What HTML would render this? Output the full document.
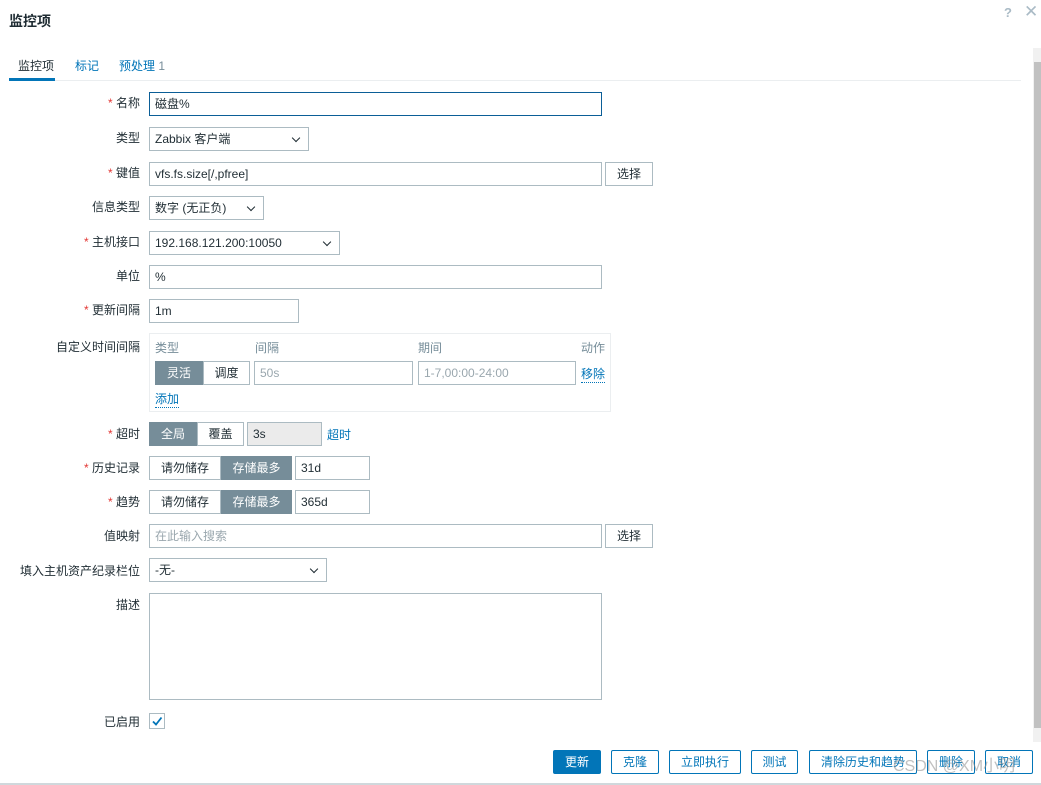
<!DOCTYPE html>
<html><head><meta charset="utf-8"><style>
*{box-sizing:border-box;margin:0;padding:0}
body{width:1041px;height:785px;background:#fff;font-family:"Liberation Sans","Noto Sans CJK SC",sans-serif;font-size:12px;color:#1f2c33;position:relative;overflow:hidden}
.a{position:absolute}
.lbl{position:absolute;right:901px;text-align:right;white-space:nowrap;margin-top:-2px}
.req::before{content:"* ";color:#e33734}
.in{position:absolute;border:1px solid #acbbc2;background:#fff;height:24px;line-height:22px;padding-left:5px;white-space:nowrap}
.sel::after{content:"";position:absolute;right:9px;top:7px;width:5px;height:5px;border-right:1.5px solid #1f2c33;border-bottom:1.5px solid #1f2c33;transform:rotate(45deg)}
.btn{position:absolute;border:1px solid #0275b8;color:#0275b8;height:24px;line-height:22px;text-align:center;border-radius:2px;background:#fff}
.seg{position:absolute;height:24px;line-height:22px;text-align:center;border:1px solid #acbbc2}
.on{background:#768d99;color:#fff;border-color:#768d99}
.link{color:#0275b8}
.dot{border-bottom:1px dotted #0275b8}
.gray{color:#768d99}
</style></head><body>
<div class="a" style="left:9px;top:11px;font-size:14px;color:#1f2c33;font-weight:bold">监控项</div>
<div class="a" style="left:1004px;top:5px;color:#aabbc6;font-size:13px;font-weight:bold">?</div>
<div class="a" style="left:1024px;top:2px;color:#aabbc6;font-size:17px">✕</div>
<div class="a" style="left:10px;top:80px;width:1011px;height:1px;background:#ebeef0"></div>
<div class="a" style="left:18px;top:57px">监控项</div>
<div class="a" style="left:9px;top:78px;width:46px;height:3px;background:#0275b8"></div>
<div class="a link" style="left:75px;top:57px">标记</div>
<div class="a link" style="left:119px;top:57px">预处理 <span class="gray">1</span></div>

<div class="a" style="left:1033px;top:48px;width:8px;height:694px;background:#f1f1f1"></div>
<div class="a" style="left:1034px;top:62px;width:7px;height:666px;background:#c1c1c1"></div>

<div class="lbl req" style="top:96px">名称</div>
<div class="in" style="left:149px;top:92px;width:453px;border-color:#0b5e97">磁盘%</div>
<div class="lbl" style="top:131px">类型</div>
<div class="in sel" style="left:149px;top:127px;width:160px">Zabbix 客户端</div>
<div class="lbl req" style="top:166px">键值</div>
<div class="in" style="left:149px;top:162px;width:453px">vfs.fs.size[/,pfree]</div>
<div class="in" style="left:605px;top:162px;width:48px;text-align:center;padding:0">选择</div>
<div class="lbl" style="top:200px">信息类型</div>
<div class="in sel" style="left:149px;top:196px;width:115px">数字 (无正负)</div>
<div class="lbl req" style="top:235px">主机接口</div>
<div class="in sel" style="left:149px;top:231px;width:191px">192.168.121.200:10050</div>
<div class="lbl" style="top:269px">单位</div>
<div class="in" style="left:149px;top:265px;width:453px">%</div>
<div class="lbl req" style="top:303px">更新间隔</div>
<div class="in" style="left:149px;top:299px;width:150px">1m</div>

<div class="lbl" style="top:340px">自定义时间间隔</div>
<div class="a" style="left:149px;top:333px;width:462px;height:79px;border:1px solid #ebeef0"></div>
<div class="a gray" style="left:155px;top:339px">类型</div>
<div class="a gray" style="left:255px;top:339px">间隔</div>
<div class="a gray" style="left:418px;top:339px">期间</div>
<div class="a gray" style="left:581px;top:339px">动作</div>
<div class="seg on" style="left:155px;top:361px;width:48px">灵活</div>
<div class="seg" style="left:203px;top:361px;width:47px">调度</div>
<div class="in" style="left:254px;top:361px;width:159px;color:#9aa7ae">50s</div>
<div class="in" style="left:418px;top:361px;width:158px;color:#9aa7ae">1-7,00:00-24:00</div>
<div class="a link dot" style="left:581px;top:365px">移除</div>
<div class="a link dot" style="left:155px;top:390px">添加</div>

<div class="lbl req" style="top:427px">超时</div>
<div class="seg on" style="left:149px;top:422px;width:48px">全局</div>
<div class="seg" style="left:197px;top:422px;width:47px">覆盖</div>
<div class="in" style="left:247px;top:422px;width:75px;background:#ebebeb">3s</div>
<div class="a link" style="left:327px;top:426px">超时</div>

<div class="lbl req" style="top:461px">历史记录</div>
<div class="seg" style="left:149px;top:456px;width:72px">请勿储存</div>
<div class="seg on" style="left:221px;top:456px;width:71px">存储最多</div>
<div class="in" style="left:295px;top:456px;width:75px">31d</div>
<div class="lbl req" style="top:495px">趋势</div>
<div class="seg" style="left:149px;top:490px;width:72px">请勿储存</div>
<div class="seg on" style="left:221px;top:490px;width:71px">存储最多</div>
<div class="in" style="left:295px;top:490px;width:75px">365d</div>

<div class="lbl" style="top:529px">值映射</div>
<div class="in" style="left:149px;top:524px;width:453px;color:#9aa7ae">在此输入搜索</div>
<div class="in" style="left:605px;top:524px;width:48px;text-align:center;padding:0">选择</div>
<div class="lbl" style="top:564px">填入主机资产纪录栏位</div>
<div class="in sel" style="left:149px;top:558px;width:178px">-无-</div>
<div class="lbl" style="top:598px">描述</div>
<div class="in" style="left:149px;top:593px;width:453px;height:107px"></div>
<div class="lbl" style="top:715px">已启用</div>
<div class="a" style="left:149px;top:713px;width:16px;height:16px;border:1px solid #acbbc2"><svg width="14" height="14" style="position:absolute;left:0;top:0"><path d="M3 7.5 L6 10.5 L11.5 3.5" fill="none" stroke="#0275b8" stroke-width="1.8"/></svg></div>

<div class="btn" style="left:553px;top:750px;width:48px;background:#0275b8;color:#fff">更新</div>
<div class="btn" style="left:611px;top:750px;width:48px">克隆</div>
<div class="btn" style="left:669px;top:750px;width:72px">立即执行</div>
<div class="btn" style="left:751px;top:750px;width:47px">测试</div>
<div class="btn" style="left:809px;top:750px;width:108px">清除历史和趋势</div>
<div class="btn" style="left:927px;top:750px;width:48px">删除</div>
<div class="btn" style="left:985px;top:750px;width:48px">取消</div>
<div class="a" style="left:893px;top:752px;color:rgba(140,140,140,.55);font-size:16px">CSDN @XM小明</div>
<div class="a" style="left:0;top:783px;width:1041px;height:2px;background:#d0d8dc"></div>
</body></html>
